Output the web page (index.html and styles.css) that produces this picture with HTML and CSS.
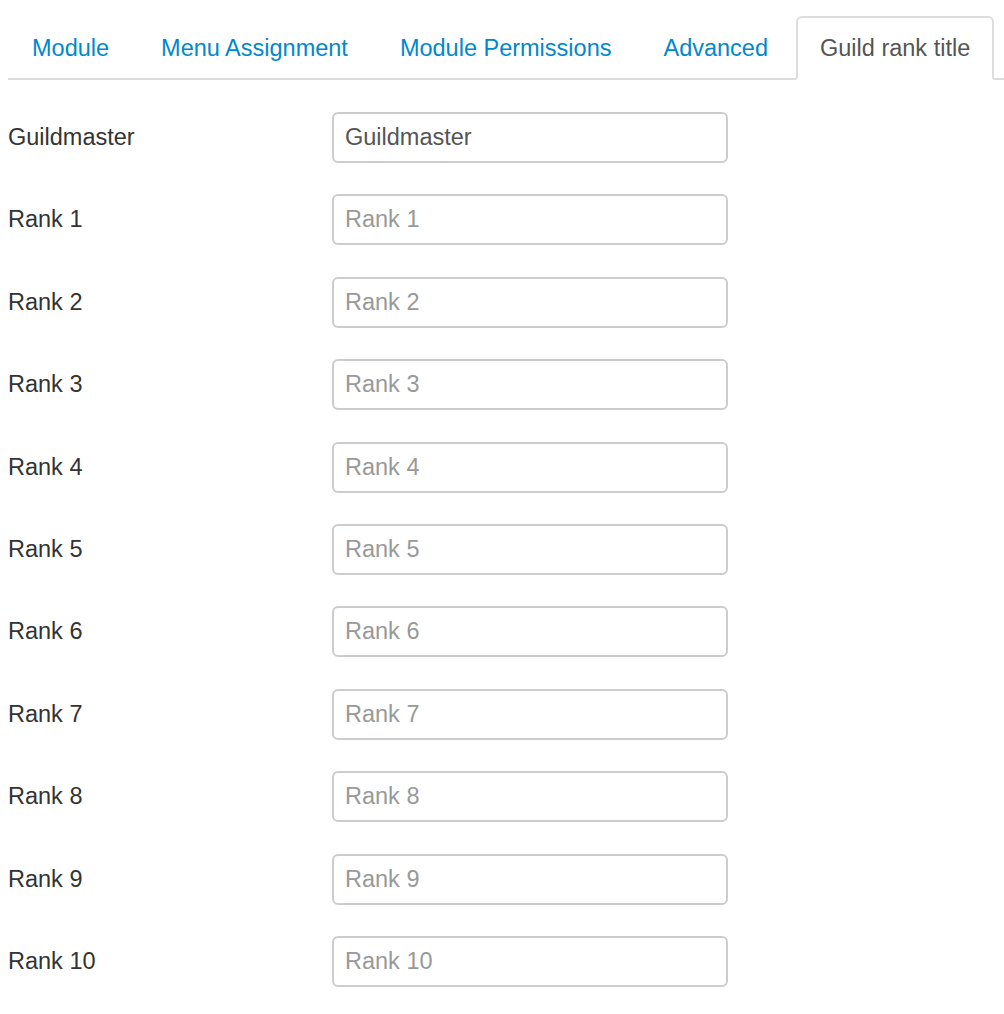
FILE: index.html
```html
<!DOCTYPE html>
<html>
<head>
<meta charset="utf-8">
<link rel="stylesheet" href="styles.css">
</head>
<body>
<div class="page">
  <ul class="tabs">
    <li class="tab"><a href="#">Module</a></li>
    <li class="tab"><a href="#">Menu Assignment</a></li>
    <li class="tab"><a href="#">Module Permissions</a></li>
    <li class="tab"><a href="#">Advanced</a></li>
    <li class="tab active"><a href="#">Guild rank title</a></li>
  </ul>
  <div class="tab-content">
    <div class="row"><label class="lbl">Guildmaster</label><input class="field" type="text" value="Guildmaster"></div>
    <div class="row"><label class="lbl">Rank 1</label><input class="field" type="text" placeholder="Rank 1"></div>
    <div class="row"><label class="lbl">Rank 2</label><input class="field" type="text" placeholder="Rank 2"></div>
    <div class="row"><label class="lbl">Rank 3</label><input class="field" type="text" placeholder="Rank 3"></div>
    <div class="row"><label class="lbl">Rank 4</label><input class="field" type="text" placeholder="Rank 4"></div>
    <div class="row"><label class="lbl">Rank 5</label><input class="field" type="text" placeholder="Rank 5"></div>
    <div class="row"><label class="lbl">Rank 6</label><input class="field" type="text" placeholder="Rank 6"></div>
    <div class="row"><label class="lbl">Rank 7</label><input class="field" type="text" placeholder="Rank 7"></div>
    <div class="row"><label class="lbl">Rank 8</label><input class="field" type="text" placeholder="Rank 8"></div>
    <div class="row"><label class="lbl">Rank 9</label><input class="field" type="text" placeholder="Rank 9"></div>
    <div class="row"><label class="lbl">Rank 10</label><input class="field" type="text" placeholder="Rank 10"></div>
  </div>
</div>
</body>
</html>
```

FILE: styles.css
```css
html, body {
  margin: 0;
  padding: 0;
  background: #fff;
}
body {
  font-family: "Liberation Sans", Arial, Helvetica, sans-serif;
  font-size: 23.5px;
  color: #333;
}
.page {
  padding: 16px 0 0 8px;
}
.tabs {
  list-style: none;
  margin: 0;
  padding: 0;
  display: flex;
  border-bottom: 2px solid #ddd;
}
.tab {
  flex-shrink: 0;
  margin: 0 4px -2px 0;
}
.tab a {
  display: block;
  padding: 15px 22px;
  line-height: 30px;
  white-space: nowrap;
  border: 2px solid transparent;
  border-radius: 6px 6px 0 0;
  color: #0088cc;
  text-decoration: none;
}
.tab.active a {
  color: #555;
  background: #fff;
  border-color: #ddd #ddd transparent #ddd;
}
.tab-content {
  padding-top: 32px;
  display: flex;
  flex-direction: column;
  gap: 31.4px;
}
.row {
  display: grid;
  grid-template-columns: 324px 396px;
  align-items: center;
}
.lbl {
  color: #333;
}
.field {
  box-sizing: border-box;
  width: 396px;
  height: 51px;
  margin: 0;
  padding: 0 11px;
  border: 2px solid #ccc;
  border-radius: 6px;
  font-family: "Liberation Sans", Arial, Helvetica, sans-serif;
  font-size: 23.5px;
  color: #555;
  background: #fff;
  outline: none;
}
.field::placeholder {
  color: #999;
  opacity: 1;
}
```
